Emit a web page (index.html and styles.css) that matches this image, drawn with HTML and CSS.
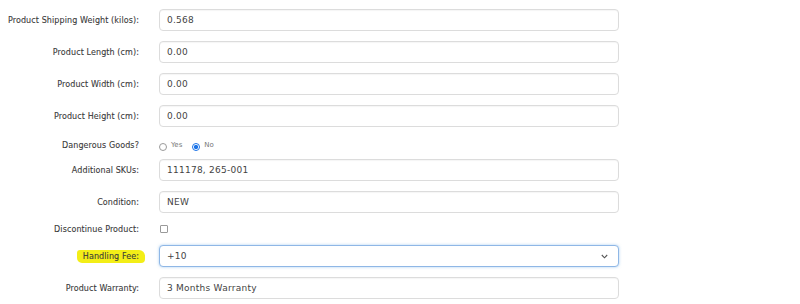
FILE: index.html
```html
<!DOCTYPE html>
<html>
<head>
<meta charset="utf-8">
<link rel="stylesheet" href="styles.css">
</head>
<body>
<form class="form">
  <div class="row">
    <label class="lbl">Product Shipping Weight (kilos):</label>
    <input class="field" type="text" value="0.568">
  </div>
  <div class="row">
    <label class="lbl">Product Length (cm):</label>
    <input class="field" type="text" value="0.00">
  </div>
  <div class="row">
    <label class="lbl">Product Width (cm):</label>
    <input class="field" type="text" value="0.00">
  </div>
  <div class="row">
    <label class="lbl">Product Height (cm):</label>
    <input class="field" type="text" value="0.00">
  </div>
  <div class="row row-small row-radio">
    <label class="lbl">Dangerous Goods?</label>
    <div class="radios">
      <span class="opt"><span class="radio"></span><span class="opt-text">Yes</span></span>
      <span class="opt"><span class="radio on"></span><span class="opt-text">No</span></span>
    </div>
  </div>
  <div class="row">
    <label class="lbl">Additional SKUs:</label>
    <input class="field" type="text" value="111178, 265-001">
  </div>
  <div class="row">
    <label class="lbl">Condition:</label>
    <input class="field" type="text" value="NEW">
  </div>
  <div class="row row-small">
    <label class="lbl">Discontinue Product:</label>
    <div class="checkwrap"><span class="checkbox"></span></div>
  </div>
  <div class="row">
    <label class="lbl"><span class="hl">Handling Fee:</span></label>
    <div class="selectwrap">
      <div class="field select-field">+10</div>
      <svg class="chev" width="7" height="5" viewBox="0 0 7 5"><path d="M0.8 1 L3.5 3.8 L6.2 1" fill="none" stroke="#555" stroke-width="1.1"/></svg>
    </div>
  </div>
  <div class="row">
    <label class="lbl">Product Warranty:</label>
    <input class="field" type="text" value="3 Months Warranty">
  </div>
</form>
</body>
</html>
```

FILE: styles.css
```css
html, body {
  margin: 0;
  padding: 0;
  background: #ffffff;
}
.form {
  display: flex;
  flex-direction: column;
  gap: 10px;
  padding-top: 9px;
  font-family: "DejaVu Sans", Verdana, sans-serif;
}
.row {
  display: grid;
  grid-template-columns: 140px 460px;
  column-gap: 19px;
  align-items: center;
  height: 22px;
}
.row-small {
  height: 12px;
}
.row-radio {
  margin-top: 2px;
  margin-bottom: -2px;
}
.lbl {
  text-align: right;
  font-size: 8px;
  letter-spacing: 0.1px;
  color: #3a3a3a;
  white-space: nowrap;
  -webkit-text-stroke: 0.1px #3a3a3a;
  padding-right: 1px;
}
.hl {
  background: #f3ee17;
  padding: 2px 6px 2px 6px;
  margin-right: -6px;
  border-radius: 3px 6px 4px 5px;
}
.field {
  box-sizing: border-box;
  width: 460px;
  height: 22px;
  border: 1px solid #dcdcdc;
  border-radius: 4px;
  padding: 0 0 0 7px;
  margin: 0;
  font-family: "DejaVu Sans", Verdana, sans-serif;
  font-size: 9px;
  letter-spacing: 0.25px;
  color: #444;
  background: #fff;
  outline: none;
  box-shadow: inset 0 1px 1px rgba(0,0,0,0.04);
}
.selectwrap {
  position: relative;
  width: 460px;
  height: 22px;
}
.select-field {
  display: flex;
  align-items: center;
  border-color: #8fb7e6;
  box-shadow: 0 0 3px rgba(102,165,230,0.55);
}
.chev {
  position: absolute;
  right: 11px;
  top: 9px;
}
.radios {
  display: flex;
  align-items: center;
  height: 12px;
  padding-left: 0;
}
.opt {
  display: inline-flex;
  align-items: center;
  margin-right: 10px;
}
.radio {
  box-sizing: border-box;
  width: 8px;
  height: 8px;
  border-radius: 50%;
  border: 1px solid #9a9a9a;
  background: #fff;
  margin-top: 3px;
}
.radio.on {
  border: 1.5px solid #1a73e8;
  background: radial-gradient(circle, #1a73e8 0 45%, #fff 55%);
}
.opt-text {
  font-family: "DejaVu Sans", Verdana, sans-serif;
  font-size: 7px;
  color: #777;
  margin-left: 4px;
  line-height: 8px;
  margin-bottom: 1px;
}
.checkwrap {
  display: flex;
  align-items: center;
  height: 12px;
}
.checkbox {
  box-sizing: border-box;
  width: 8px;
  height: 8px;
  border: 1px solid #9a9a9a;
  border-radius: 1px;
  background: #fff;
  margin-left: 1px;
}
```
